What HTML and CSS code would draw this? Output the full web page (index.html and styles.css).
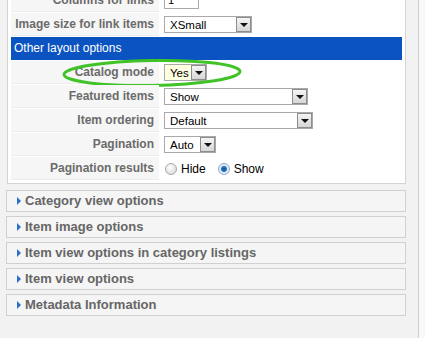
FILE: index.html
```html
<!DOCTYPE html>
<html lang="en">
<head>
    <meta charset="UTF-8">
    <title>Category parameters</title>
    <link rel="stylesheet" href="styles.css">
</head>
<body>
    <div class="pane">
        <div class="panel">
            <div class="param-row">
                <div class="param-key">Columns for links</div>
                <div class="param-value"><span class="text-input">1</span></div>
            </div>
            <div class="param-row">
                <div class="param-key">Image size for link items</div>
                <div class="param-value">
                    <span class="select w-xsmall"><span class="select-text">XSmall</span><span class="select-btn"></span></span>
                </div>
            </div>
            <div class="section-title">Other layout options</div>
            <div class="param-row highlighted">
                <div class="param-key">Catalog mode</div>
                <div class="param-value">
                    <span class="select w-yes active"><span class="select-text">Yes</span><span class="select-btn"></span></span>
                </div>
                <svg class="ring" width="190" height="32" viewBox="0 0 190 32">
                    <ellipse cx="95" cy="16" rx="88" ry="12.5" fill="none" stroke="#3fc326" stroke-width="3" transform="rotate(-1 95 16)"/>
                </svg>
            </div>
            <div class="param-row">
                <div class="param-key">Featured items</div>
                <div class="param-value">
                    <span class="select w-show"><span class="select-text">Show</span><span class="select-btn"></span></span>
                </div>
            </div>
            <div class="param-row">
                <div class="param-key">Item ordering</div>
                <div class="param-value">
                    <span class="select w-default"><span class="select-text">Default</span><span class="select-btn"></span></span>
                </div>
            </div>
            <div class="param-row">
                <div class="param-key">Pagination</div>
                <div class="param-value">
                    <span class="select w-auto"><span class="select-text">Auto</span><span class="select-btn"></span></span>
                </div>
            </div>
            <div class="param-row">
                <div class="param-key">Pagination results</div>
                <div class="param-value">
                    <span class="radio"></span><span class="radio-label">Hide</span>
                    <span class="radio checked"></span><span class="radio-label">Show</span>
                </div>
            </div>
        </div>

        <div class="slider">Category view options</div>
        <div class="slider">Item image options</div>
        <div class="slider">Item view options in category listings</div>
        <div class="slider">Item view options</div>
        <div class="slider">Metadata Information</div>
    </div>
</body>
</html>
```

FILE: styles.css
```css
body {
    margin: 0;
    height: 338px;
    overflow: hidden;
    background: #f8f8f8;
    font-family: "Liberation Sans", Arial, sans-serif;
    font-size: 11px;
    color: #333;
}

.pane {
    width: 399px;
    height: 338px;
    overflow: hidden;
    padding: 15px 12px 0 7px;
    box-sizing: content-box;
    background: #f2f2f2;
    border-right: 1px solid #cfcfcf;
}

.panel {
    margin-top: -30px;
    margin-bottom: 6px;
    padding: 3px;
    background: #fff;
    border: 1px solid #d4d4d4;
    display: flex;
    flex-direction: column;
    gap: 1px;
}

.param-row {
    position: relative;
    display: flex;
    height: 23px;
}

.param-key {
    width: 148px;
    flex-shrink: 0;
    box-sizing: border-box;
    padding-right: 5px;
    background: #f6f6f6;
    border-bottom: 1px solid #ececec;
    text-align: right;
    font-size: 12px;
    font-weight: bold;
    color: #6b6b6b;
    line-height: 23px;
    margin-right: 1px;
}

.param-value {
    flex: 1;
    display: flex;
    align-items: center;
    padding-left: 4px;
}

.section-title {
    height: 23px;
    line-height: 23px;
    padding-left: 3px;
    background: #0b53c1;
    color: #fff;
    font-size: 12px;
}

.text-input {
    box-sizing: border-box;
    width: 35px;
    height: 17px;
    line-height: 15px;
    padding-left: 3px;
    border: 1px solid #aaa;
    background: #fff;
    color: #000;
}

.select {
    box-sizing: border-box;
    display: flex;
    align-items: center;
    justify-content: space-between;
    height: 17px;
    border: 1px solid #a9a9a9;
    background: #fff;
    color: #000;
    font-size: 11.5px;
}

.select.active {
    background: #ffffe1;
}

.select-text {
    padding-left: 5px;
}

.select-btn {
    position: relative;
    box-sizing: border-box;
    width: 15px;
    height: 15px;
    border: 1px solid #8d8d8d;
    background: linear-gradient(#f4f4f4, #d6d6d6);
}

.select-btn::after {
    content: "";
    position: absolute;
    left: 3px;
    top: 5px;
    border-left: 4px solid transparent;
    border-right: 4px solid transparent;
    border-top: 4px solid #111;
}

.w-xsmall { width: 88px; }
.w-yes { width: 43px; }
.w-show { width: 144px; }
.w-default { width: 149px; }
.w-auto { width: 52px; }

.radio {
    box-sizing: border-box;
    width: 12px;
    height: 12px;
    border-radius: 50%;
    border: 1px solid #a8a8a8;
    background: radial-gradient(circle at 40% 35%, #ffffff, #d2d2d2);
    margin-left: 1px;
}

.radio.checked {
    margin-left: 12px;
    border-color: #8aa6c4;
    background: radial-gradient(circle, #0e4f8c 0, #2a78c0 2.5px, #d9e6f3 3.5px, #f4f8fc 6px);
}

.radio-label {
    margin-left: 4px;
    font-size: 12px;
    color: #000;
}

.ring {
    position: absolute;
    left: 46px;
    top: -4px;
    pointer-events: none;
}

.slider {
    box-sizing: border-box;
    height: 22px;
    margin-bottom: 4px;
    margin-left: -1px;
    padding-left: 18px;
    position: relative;
    background: #f5f5f5;
    border: 1px solid #d0d0d0;
    font-size: 13px;
    font-weight: bold;
    color: #666;
    line-height: 20px;
}

.slider::before {
    content: "";
    position: absolute;
    left: 10px;
    top: 6px;
    border-top: 4px solid transparent;
    border-bottom: 4px solid transparent;
    border-left: 4px solid #2a6fc9;
}
```
